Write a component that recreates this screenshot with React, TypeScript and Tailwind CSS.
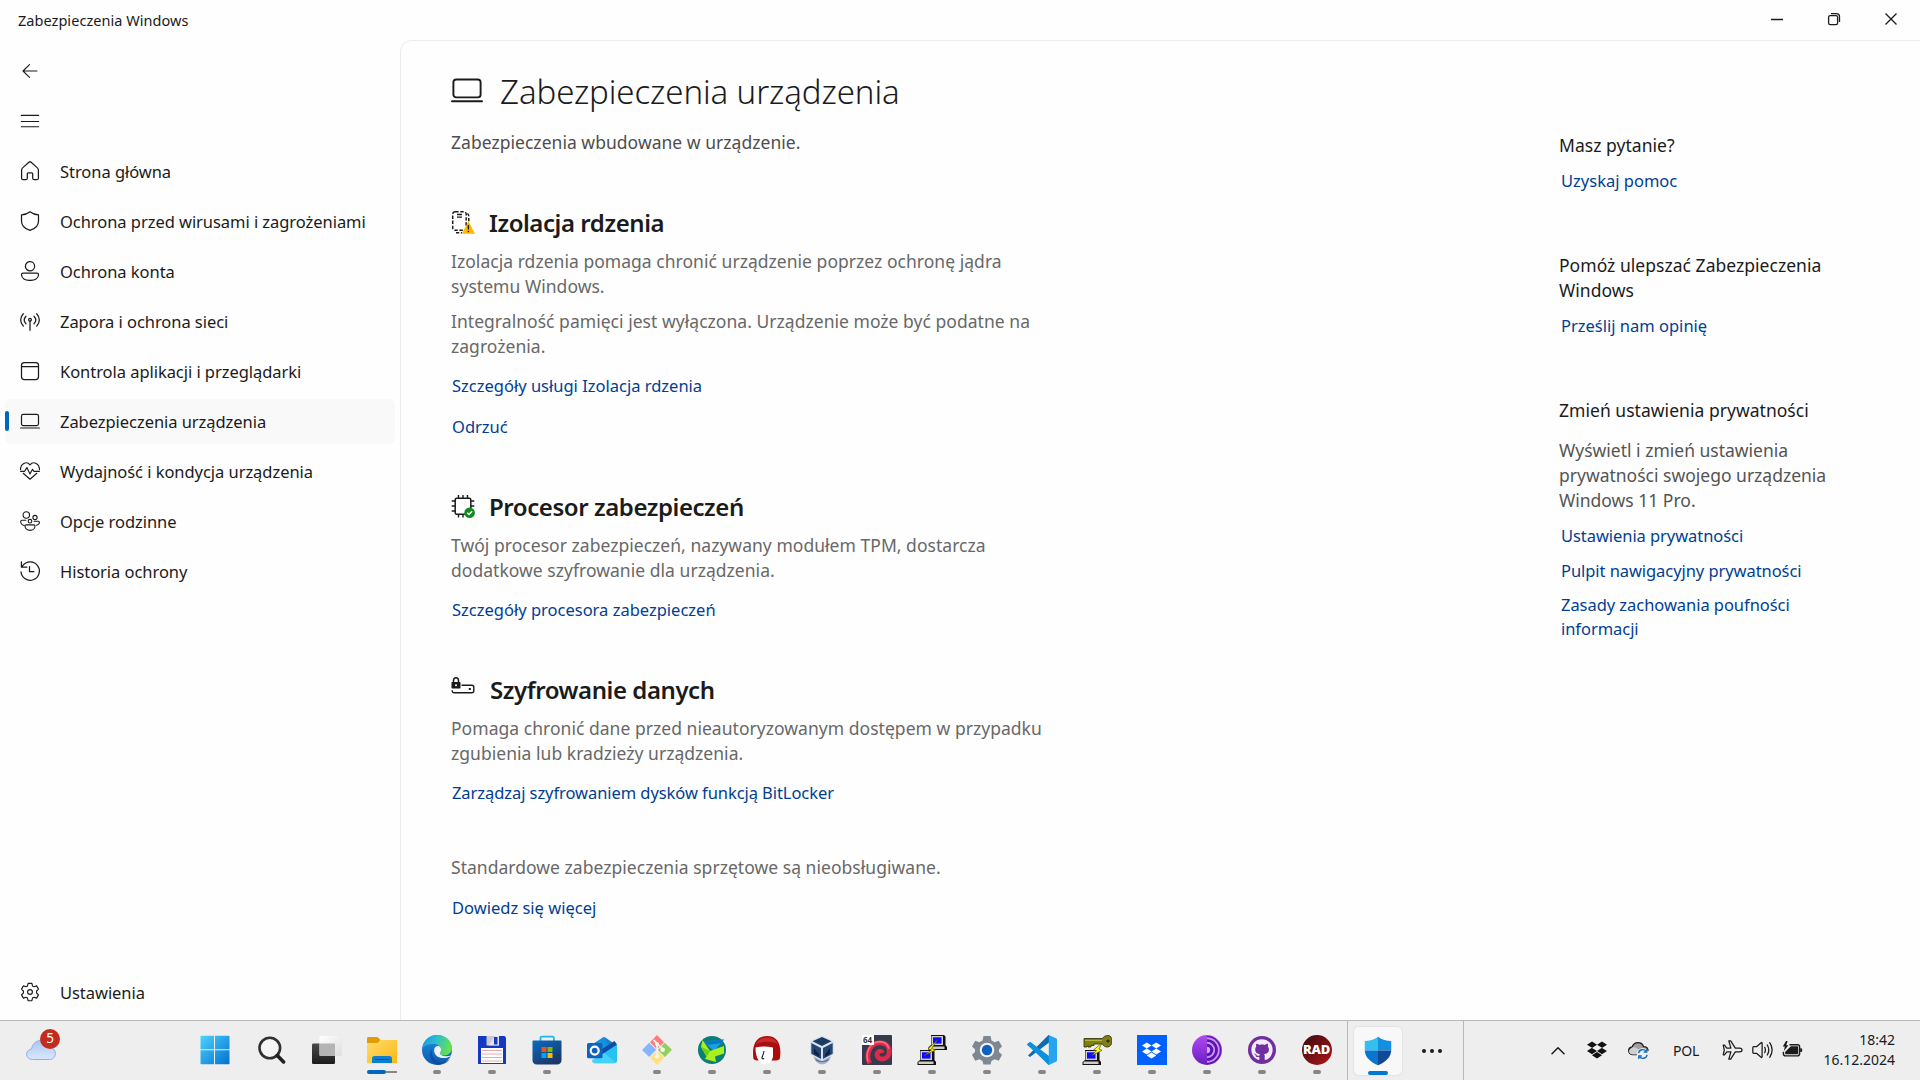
import React from "react";
import { FaDropbox, FaGithub } from "react-icons/fa";

type Kids = { children: React.ReactNode };

/* ---------- line icons ---------- */

function Line({ children, size = 20, sw = 1.25 }: Kids & { size?: number; sw?: number }) {
  return (
    <svg
      width={size}
      height={size}
      viewBox="0 0 20 20"
      fill="none"
      stroke="#1b1b1b"
      strokeWidth={sw}
      strokeLinecap="round"
      strokeLinejoin="round"
      className="shrink-0"
    >
      {children}
    </svg>
  );
}

const BackIcon = () => (
  <Line sw={1.1}>
    <path d="M17 10H3M9.5 3.7 3 10l6.500 6.300" />
  </Line>
);
const MenuIcon = () => (
  <Line sw={1.1}>
    <path d="M1.300 4.400h17.400M1.300 10.500h17.400M1.300 15.800h17.400" />
  </Line>
);
const HomeIcon = () => (
  <Line>
    <path d="M1.600 9c0-.9.3-1.500 1-2.100L8.900 1.200c.7-.6 1.500-.6 2.200 0l6.300 5.700c.7.6 1 1.200 1 2.100v8.200c0 .9-.6 1.500-1.500 1.500h-2.700c-.9 0-1.500-.6-1.500-1.500v-4.400c0-.6-.4-1-1-1H8.300c-.6 0-1 .4-1 1v4.400c0 .9-.6 1.500-1.500 1.500H3.100c-.9 0-1.500-.6-1.500-1.500z" />
  </Line>
);
const ShieldIcon = () => (
  <Line>
    <path d="M10 .8c2.300 1.900 5 2.900 8.500 3.100v6c0 4.600-3 7.700-8.500 9.500C4.500 17.600 1.500 14.500 1.500 9.900v-6C5 3.700 7.700 2.700 10 .8z" />
  </Line>
);
const PersonIcon = () => (
  <Line>
    <circle cx="10" cy="5.200" r="4.600" />
    <path d="M3 12.200h14c.9 0 1.500.6 1.500 1.500 0 3.500-3.600 5.700-8.500 5.700s-8.500-2.200-8.500-5.700c0-.9.6-1.500 1.500-1.500z" />
  </Line>
);
const NetworkIcon = () => (
  <Line>
    <path d="M10 10v9.300M3.300 2.700C-.2 6.400-.2 11.400 3.300 15M16.700 2.700c3.500 3.700 3.500 8.700 0 12.300M6 5.200c-2.200 2.300-2.200 5.300 0 7.600M14 5.200c2.200 2.300 2.200 5.300 0 7.600" />
    <circle cx="10" cy="8.700" r="1.400" />
  </Line>
);
const AppIcon = () => (
  <Line>
    <rect x="1.500" y="1.500" width="17" height="17" rx="2.800" />
    <path d="M1.700 5.700h16.600" />
  </Line>
);
const LaptopIcon = ({ size = 20 }: { size?: number }) => (
  <Line size={size} sw={1.2}>
    <rect x="1.500" y="3.400" width="17" height="11.200" rx="1.800" />
    <path d="M.6 17h18.800" />
  </Line>
);
const HeartIcon = () => (
  <Line sw={1.150}>
    <path d="M.6 8.800C-.1 3.200 6.500-.6 10 3.800c3.500-4.400 10.100-.6 9.400 5" />
    <path d="M.6 10.300h4l2.300-3.700L10 13l2.500-4.700 1.300 2h5.600M3.200 12.300 10 18.200l6.800-5.900" />
  </Line>
);
const FamilyIcon = () => (
  <Line sw={1.1}>
    <circle cx="6.300" cy="4" r="3.200" />
    <circle cx="15" cy="6.500" r="2.100" />
    <circle cx="10" cy="10.200" r="1.800" />
    <path d="M5.800 9.200H2c-.8 0-1.300.5-1.300 1.300 0 1.900 1.300 3.400 3.300 4M14 10.200h4.200c.7 0 1.200.5 1.200 1.100 0 1.700-1.200 2.700-3 3M6 13.900h8c.7 0 1 .4 1 1.100 0 2.500-2.100 4.400-5 4.400s-5-1.900-5-4.400c0-.7.3-1.100 1-1.100z" />
  </Line>
);
const HistoryIcon = () => (
  <Line>
    <path d="M1 10.800a9.200 9.200 0 1 0 2.100-6.600L1.500 5.900M1.400.9v5.300h5.400M9.500 5.600v5.100h4.400" />
  </Line>
);
const SettingsIcon = () => (
  <Line sw={1.150}>
    <circle cx="10" cy="10" r="2.400" />
    <path d="M8.100 1.300h3.800l.6 2.600 1.500.8 2.600-.8 1.900 3.200-1.900 1.900v2l1.900 1.900-1.900 3.200-2.600-.8-1.500.8-.6 2.600H8.100l-.6-2.600-1.500-.8-2.600.8-1.900-3.200L3.400 11V9L1.500 7.100l1.900-3.200 2.600.8 1.500-.8z" />
  </Line>
);

/* ---------- section icons ---------- */

const CoreIcon = () => (
  <svg width="24" height="24" viewBox="0 0 24 24" fill="none" className="shrink-0">
    <rect x="1.700" y="1.700" width="13.500" height="18.600" rx="2.500" stroke="#1b1b1b" strokeWidth="1.500" strokeDasharray="3.400 1.700" />
    <path d="M6 4.500h5M6 7.200h5" stroke="#1b1b1b" strokeWidth="1.300" />
    <path d="M16.500 3.500c1 .8 1.300 1.700 1.300 3V12M5 22.800h6" stroke="#1b1b1b" strokeWidth="1.500" strokeDasharray="3.200 1.700" />
    <path d="M17.500 11.200 24 23.700H10.800z" fill="#ffb900" />
    <path d="M17.400 15v4.600M17.400 20.700v1.500" stroke="#1b1b1b" strokeWidth="1.400" />
  </svg>
);
const ChipIcon = () => (
  <svg width="24" height="24" viewBox="0 0 24 24" fill="none" className="shrink-0">
    <rect x="4.200" y="4.200" width="15.600" height="16" rx="1.500" stroke="#1b1b1b" strokeWidth="1.500" />
    <path d="M7.500 1v3M12 1v3M16.500 1v3M7.500 20v3.500M12 20v3.500M.7 7h3.500M.7 12h3.500M.7 17h3.500M20 7h3.300M20 12h3.300" stroke="#1b1b1b" strokeWidth="1.400" />
    <circle cx="18.600" cy="18.700" r="5.300" fill="#0f8a1c" />
    <path d="m16.200 18.700 1.800 1.800 3.100-3.300" stroke="#fff" strokeWidth="1.500" />
  </svg>
);
const DriveIcon = () => (
  <svg width="24" height="24" viewBox="0 0 24 24" fill="none" className="shrink-0">
    <path d="M10.500 8.300h10.300c1.200 0 2 .8 2 2v3.500c0 1.200-.8 2-2 2H3.200c-1.200 0-2-.8-2-2v-.5" stroke="#1b1b1b" strokeWidth="1.400" />
    <path d="M2.500 5.500V3.700C2.500 2 3.400.8 5 .8S7.500 2 7.500 3.700v1.800" stroke="#1b1b1b" strokeWidth="1.500" />
    <rect x="0.500" y="5" width="9" height="6.500" rx="0.700" fill="#1b1b1b" />
    <circle cx="5" cy="8.200" r="1" fill="#fff" />
    <rect x="17.800" y="11" width="2" height="2" fill="#1b1b1b" />
  </svg>
);

/* ---------- taskbar icons ---------- */

function Pic({ children }: Kids) {
  return (
    <svg width="30" height="30" viewBox="0 0 30 30" className="shrink-0">
      {children}
    </svg>
  );
}

const StartIcon = () => (
  <Pic>
    <defs>
      <linearGradient id="st" x1="0" y1="0" x2="1" y2="1">
        <stop offset="0" stopColor="#4fd2ff" />
        <stop offset="1" stopColor="#0070d0" />
      </linearGradient>
    </defs>
    <path fill="url(#st)" d="M1.500.8H14v13.500H.5V1.800c0-.6.4-1 1-1zM15 .8h13.500c.6 0 1 .4 1 1v12.500H15zM.5 15.300H14v14H1.500c-.6 0-1-.4-1-1zM15 15.300h14.500v13c0 .6-.4 1-1 1H15z" />
  </Pic>
);
const SearchIcon = () => (
  <Pic>
    <circle cx="12.800" cy="13" r="10.300" fill="#f4f4f4" stroke="#303030" strokeWidth="2.600" />
    <path d="m20.300 20.500 6.300 6.400" stroke="#202020" strokeWidth="3.600" strokeLinecap="round" />
  </Pic>
);
const TaskViewIcon = () => (
  <Pic>
    <defs>
      <linearGradient id="tv" x1="0" y1="0" x2="0" y2="1">
        <stop offset="0" stopColor="#4a4a4a" />
        <stop offset="1" stopColor="#1c1c1c" />
      </linearGradient>
      <linearGradient id="tw" x1="0" y1="0" x2="1" y2="1">
        <stop offset="0" stopColor="#fff" />
        <stop offset="1" stopColor="#dedede" />
      </linearGradient>
    </defs>
    <rect x="0" y="8.500" width="23" height="20.500" rx="1.200" fill="url(#tv)" />
    <rect x="7.500" y="1" width="22.300" height="20" rx="1.200" fill="url(#tw)" />
    <path d="M7.500 8.500H23V21H8.500c-.6 0-1-.4-1-1z" fill="#b4b4b4" />
  </Pic>
);
const FolderIcon = () => (
  <Pic>
    <defs>
      <linearGradient id="fo" x1="0" y1="0" x2="1" y2="1">
        <stop offset="0" stopColor="#ffdc6e" />
        <stop offset="1" stopColor="#fbb80f" />
      </linearGradient>
    </defs>
    <path d="M0 3.500C0 2.600.6 2 1.500 2h8.200c.6 0 1.100.2 1.500.6L13.500 5H30v6H0z" fill="#e09c05" />
    <path d="M0 8h9.500c.6 0 1-.2 1.500-.6L13.500 5H29c.6 0 1 .4 1 1v22.300H0z" fill="url(#fo)" />
    <path d="M5 28V23.500c0-1.500 1-2.500 2.500-2.500h15c1.500 0 2.500 1 2.500 2.500V28z" fill="#0b7fd0" />
    <path d="M8.500 24.500h13" stroke="#08508f" strokeWidth="1.200" strokeLinecap="round" />
  </Pic>
);
const EdgeIcon = () => (
  <Pic>
    <defs>
      <linearGradient id="e1" x1="0" y1="0" x2="1" y2=".3">
        <stop offset="0" stopColor="#1b8fe0" />
        <stop offset=".5" stopColor="#2cbfd0" />
        <stop offset="1" stopColor="#63e052" />
      </linearGradient>
      <linearGradient id="e2" x1="0" y1="0" x2="0" y2="1">
        <stop offset="0" stopColor="#1d93e0" />
        <stop offset="1" stopColor="#0d56b0" />
      </linearGradient>
    </defs>
    <circle cx="15" cy="15" r="15" fill="url(#e2)" />
    <path d="M.3 13.500C1.200 5.800 7.500 0 15 0c8.500 0 15 6 15 12.800 0 4.700-3.500 7.600-7.500 7.600-3.300 0-4.700-1.200-4.700-2.200 0-.9 1.300-1.300 1.300-3.500 0-3-3-5.700-7.300-5.700-5.300 0-9.500 2-11.500 4.500z" fill="url(#e1)" />
    <path d="M10.200 13.300c-2 5 1.200 12.500 8.300 13.600 4 .6 7.200-.6 9.500-2.900C25.500 27.700 21 30 16 30 9 28.500 5.500 18.500 10.200 13.300z" fill="#0b4b9c" opacity=".75" />
    <path d="M17.800 18.200c0-.9 1.300-1.300 1.300-3.500 0-1.800-1-3-2-3.500-2.600-.6-5 1-5 4 0 3.500 2.500 6.600 6.400 7.500 4.500 1 8.500.2 11-2.400-6 2-11.700.1-11.700-2.100z" fill="#f2f2f2" />
    <path d="M29.500 19.500c-.5 1.600-1 3-2 4.500l3 .5V18z" fill="#eee" />
  </Pic>
);
const FloppyIcon = () => (
  <Pic>
    <path d="M1 1h26.500L29 2.500V29H1z" fill="#1438c4" />
    <path d="M9.500 1h12.500v9.500H9.500z" fill="#c9c9cf" />
    <path d="M11.500 10.500 18 1h4v9.500z" fill="#eee" opacity=".7" />
    <path d="M17 2h3.500v7.500H17z" fill="#1438c4" />
    <path d="M4 13h22v15H4z" fill="#fff" />
    <path d="M5 15.500h20M5 19h20M5 22.500h20M5 26h20" stroke="#eba9a9" strokeWidth="1.200" />
  </Pic>
);
const StoreIcon = () => (
  <Pic>
    <defs>
      <linearGradient id="so" x1="0" y1="0" x2=".6" y2="1">
        <stop offset="0" stopColor="#0a6bc0" />
        <stop offset="1" stopColor="#1c3768" />
      </linearGradient>
    </defs>
    <path d="M8.500 7V2.800c0-.7.5-1.200 1.200-1.200h11c.7 0 1.200.5 1.200 1.200V7" fill="none" stroke="#1fb6ef" strokeWidth="1.800" />
    <path d="M.5 6.500c0-.6.4-1 1-1h27c.6 0 1 .4 1 1V25c0 2.800-1.700 4.500-4.500 4.500H5C2.200 29.500.5 27.800.5 25z" fill="url(#so)" />
    <path d="M9.500 12h5v5h-5z" fill="#f25022" />
    <path d="M15.500 12h5v5h-5z" fill="#7fba00" />
    <path d="M9.500 18h5v5h-5z" fill="#00a4ef" />
    <path d="M15.500 18h5v5h-5z" fill="#ffb900" />
  </Pic>
);
const OutlookIcon = () => (
  <Pic>
    <path d="M4 10.500 16 2.600c.8-.5 1.500-.5 2.300 0L30 10.500l-13 9z" fill="#1d7fd2" />
    <path d="M16.500 2.300 6 9l11 8 6-4.500z" fill="#1492e0" />
    <path d="M30 9.500v16c0 1.700-1 2.800-2.700 2.800H8c-1.700 0-2.700-1-2.700-2.800L17 18z" fill="#27c2f2" />
    <path d="M30 9.500 17 18l-2 1.500V14l12.500-8z" fill="#0c4ea6" />
    <path d="m5.300 24 11.700-6 12 9.500c-.5.500-1 .7-1.700.7H8c-1.700 0-2.700-1-2.700-2.700z" fill="#4fdcf8" opacity=".7" />
    <rect x="0" y="8" width="15.500" height="15.300" rx="1.500" fill="#0f62bd" />
    <circle cx="7.700" cy="15.600" r="4" fill="none" stroke="#fff" strokeWidth="2.200" />
  </Pic>
);
const GitIcon = () => (
  <Pic>
    <path d="m15 0 7 7.200-7 7-7-7z" fill="#ff7b7b" />
    <path d="m22.800 7.800 7.200 7-7.200 7.200-7-7z" fill="#92cf5e" />
    <path d="m7.200 7.800 7 7-7 7.200L0 14.900z" fill="#86b4ff" />
    <path d="m15 15.700 7 7L15 30l-7-7.300z" fill="#ffe07c" />
    <path d="M11.500 5 15 8.500V22M15.500 9l5.500 5.500" stroke="#f1efe8" strokeWidth="1.800" fill="none" />
    <circle cx="15" cy="9" r="2" fill="#f6f4ee" />
    <circle cx="15" cy="21.300" r="2.300" fill="#f6f4ee" />
    <circle cx="20.700" cy="14.800" r="2.300" fill="#f6f4ee" />
  </Pic>
);
const GreenIcon = () => (
  <Pic>
    <circle cx="15" cy="15" r="14" fill="#0b7f74" />
    <path d="m6 6.500 21-2L17 16z" fill="#18a2e4" />
    <path d="m6 6.500 21-2-3 3.500-13 2z" fill="#0b76c2" />
    <path d="m5.500 5 7.500 11 14-5v7.500l-9 3 1 5.500-11-3 1.500-2.500L4 12z" fill="#a9f01c" />
    <path d="m4.500 12 8.500 4-3.500 6z" fill="#6fd010" />
  </Pic>
);
const RedHairIcon = () => (
  <Pic>
    <path d="M1.500 24C-.5 10 4 1 15 1s15 9 12.800 23c-1.800 1.400-3.800 1.800-6.300 1.500H8c-2.500.3-4.700-.1-6.500-1.500z" fill="#ad0c0c" />
    <path d="M4 9C6.500 4 10 2.500 15 2.500S23.500 4 26 9C19 6 11 6 4 9z" fill="#d63b3b" opacity=".65" />
    <path d="M3.500 12.500c6-1.300 12-1.300 17.500 0v9c-1 5-4 8-8 8-4.500 0-9.500-5-9.500-17z" fill="#fff" />
    <path d="M12 16c-.4 3-1.300 5-2.200 7 .7 1.200 1.600 1 2.400.3" fill="none" stroke="#1c1c1c" strokeWidth="1.100" />
  </Pic>
);
const CubeIcon = () => (
  <Pic>
    <path d="M6.500 21c1 5 4.500 8.300 8.500 8.300s8-3.300 9-8.300z" fill="#a3b1c7" />
    <path d="M8.500 24.500c3.500 3 9.500 3 13 0M9.500 21c3.500 3 8.500 3 12 0" fill="none" stroke="#5d7395" strokeWidth="1.200" />
    <path d="M15 .5 27 6v13.500L15 26 3 19.500V6z" fill="#d9e3ef" />
    <path d="m15 2 9.500 4.300L15 11 5.500 6.300z" fill="#1d3a63" />
    <path d="m4.300 8 9.700 5v11l-9.700-5.300zM25.700 8 16 13v11l9.700-5.300z" fill="#254673" />
    <path d="m7 13 5 6.500v2.200l-5-3zM23 13l-5 6.500v2.200l5-3z" fill="#0e2344" />
  </Pic>
);
const SwirlIcon = () => (
  <span className="relative size-[30px]">
    <Pic>
      <rect width="30" height="30" rx="1" fill="#353b49" />
      <path d="M7.500 28.500C3 18.500 8.500 7.800 18 7.800c6 0 9.300 4 9.300 8.700 0 4.500-3.500 8-8 7.500-4-.5-5.300-4.300-3.300-6.700 1.300-1.600 3.800-1.300 4.300.5" fill="none" stroke="#dc2c4e" strokeWidth="4.800" />
      <path d="M6 26.500C3 17 8.500 6.800 17.500 6.600c5.500 0 8.500 3.200 9.300 7" fill="none" stroke="#ff6a80" strokeWidth="1.600" />
    </Pic>
    <span className="absolute top-0 left-0 flex h-[10px] w-3 items-center justify-center bg-white text-[8px] leading-none font-bold text-[#333]">64</span>
  </span>
);
const Terminal = ({ x, y }: { x: number; y: number }) => (
  <g transform={`translate(${x} ${y})`}>
    <path d="M3 0h13l1.500 1.500V10L19 12v3H.5v-3L3 10z" fill="#111" />
    <path d="M3.500 1H15v9H3.500z" fill="#d4d0c8" />
    <path d="M5 2.300h8.500v6.300H5z" fill="#0b0bff" />
    <path d="M1.500 11.500h15V14h-15z" fill="#cfcbc3" />
  </g>
);
const PuttyIcon = () => (
  <Pic>
    <Terminal x={11} y={0} />
    <Terminal x={0} y={15} />
    <path d="m20.500 5-9.500 9 3.500 1-7 5.500 11-5.500-4-1.500z" fill="#ffff1a" stroke="#55500a" strokeWidth=".7" />
  </Pic>
);
const PuttygenIcon = () => (
  <Pic>
    <Terminal x={0} y={15} />
    <path d="M2 3.500h18.500C21.500 1.500 23.500.5 26 .5c2.500 0 4 2 4 5.500s-2 6-4.500 6-4-1-5-3H12v1.500H9V12H6v-1.500L5 12H2z" fill="#808012" stroke="#2b2b05" strokeWidth=".8" />
    <circle cx="26" cy="6" r="1.600" fill="#2b2b05" />
    <path d="M3 5.500h17" stroke="#b5b54a" strokeWidth="1" />
    <path d="m20 8-8.500 7 3 .6-4.500 5 10-5.300-3-1.300z" fill="#ffff1a" stroke="#55500a" strokeWidth=".7" />
  </Pic>
);
const GearIcon = () => (
  <Pic>
    <path
      d="M11.500 1h7l1 4.500 3 1.700 4.300-1.400 3.200 5.800-3 2.700v2.800l3 2.700-3.200 5.900-4.300-1.400-3 1.700-1 3.500h-7l-1-3.500-3-1.700-4.300 1.400L0 19.800l3-2.700v-2.800l-3-2.700 3.200-5.800 4.300 1.400 3-1.700z"
      fill="#7f8790"
      strokeLinejoin="round"
    />
    <circle cx="15" cy="15" r="7.300" fill="#f1f2f3" />
    <circle cx="15" cy="15" r="5.200" fill="#0c62bd" />
  </Pic>
);
const CodeIcon = () => (
  <Pic>
    <path d="M1 9.500 3 8l19 14.500V30h-.5z" fill="#0d8bd4" />
    <path d="M1 20.500 3 22 22 7.500V0h-.5z" fill="#0b6cb5" />
    <path d="M.5 10.300c-.6-.6-.5-1.200 0-1.600l1.800-1.500c.5-.4 1-.4 1.500 0L22 21v8.500z" fill="#0f8fd9" />
    <path d="M21.800 0 29 3.300c.7.3 1 .8 1 1.500v20.400c0 .7-.3 1.200-1 1.500L21.800 30z" fill="#25a5f0" />
  </Pic>
);
const DropboxTile = () => (
  <span className="flex size-[30px] items-center justify-center bg-[#0061fe]">
    <FaDropbox size={19} color="#fff" />
  </span>
);
const TorIcon = () => (
  <Pic>
    <defs>
      <linearGradient id="to" x1="0" y1="0" x2="0" y2="1">
        <stop offset="0" stopColor="#b04bf0" />
        <stop offset="1" stopColor="#6a1bc4" />
      </linearGradient>
    </defs>
    <circle cx="15" cy="15" r="15" fill="url(#to)" />
    <path d="M15 1a14 14 0 0 1 0 28z" fill="#5c12b0" />
    <path d="M15 3.200a11.800 11.800 0 0 1 0 23.600M15 7.800a7.200 7.200 0 0 1 0 14.400" fill="none" stroke="#c896f5" strokeWidth="1.900" />
    <path d="M15 11.800a3.200 3.200 0 0 1 0 6.400z" fill="#d3aaf7" />
  </Pic>
);
const GithubDisc = () => (
  <span className="flex size-7 items-center justify-center rounded-full bg-[#6f2f9f]">
    <FaGithub size={22} color="#f3ebf8" />
  </span>
);
const RadIcon = () => (
  <span className="flex size-[30px] items-center justify-center rounded-full bg-gradient-to-br from-[#3a0a0c] to-[#b5121b]">
    <span className="font-['Open_Sans',sans-serif] text-[13px] font-extrabold tracking-tight text-white">RAD</span>
  </span>
);
const DefenderIcon = () => (
  <Pic>
    <path d="M15 .8C11 4 6.500 5 1.800 5v9.500H15z" fill="#34c0ef" />
    <path d="M15 .8c4 3.200 8.500 4.200 13.200 4.200v9.500H15z" fill="#1490e0" />
    <path d="M1.800 14.500H15v14.700C7 26 2 21 1.800 14.500z" fill="#0876cf" />
    <path d="M28.200 14.500H15v14.700c8-3.200 13-8.200 13.200-14.700z" fill="#10499a" />
  </Pic>
);

/* ---------- page data ---------- */

const nav = [
  { label: "Strona główna", Icon: HomeIcon },
  { label: "Ochrona przed wirusami i zagrożeniami", Icon: ShieldIcon },
  { label: "Ochrona konta", Icon: PersonIcon },
  { label: "Zapora i ochrona sieci", Icon: NetworkIcon },
  { label: "Kontrola aplikacji i przeglądarki", Icon: AppIcon },
  { label: "Zabezpieczenia urządzenia", Icon: LaptopIcon, active: true },
  { label: "Wydajność i kondycja urządzenia", Icon: HeartIcon },
  { label: "Opcje rodzinne", Icon: FamilyIcon },
  { label: "Historia ochrony", Icon: HistoryIcon },
];

type Mark = "none" | "dot" | "folder";
const apps: { Icon: () => React.ReactElement; mark: Mark }[] = [
  { Icon: SearchIcon, mark: "none" },
  { Icon: TaskViewIcon, mark: "none" },
  { Icon: FolderIcon, mark: "folder" },
  { Icon: EdgeIcon, mark: "dot" },
  { Icon: FloppyIcon, mark: "dot" },
  { Icon: StoreIcon, mark: "dot" },
  { Icon: OutlookIcon, mark: "none" },
  { Icon: GitIcon, mark: "dot" },
  { Icon: GreenIcon, mark: "dot" },
  { Icon: RedHairIcon, mark: "dot" },
  { Icon: CubeIcon, mark: "dot" },
  { Icon: SwirlIcon, mark: "dot" },
  { Icon: PuttyIcon, mark: "dot" },
  { Icon: GearIcon, mark: "dot" },
  { Icon: CodeIcon, mark: "dot" },
  { Icon: PuttygenIcon, mark: "dot" },
  { Icon: DropboxTile, mark: "dot" },
  { Icon: TorIcon, mark: "dot" },
  { Icon: GithubDisc, mark: "dot" },
  { Icon: RadIcon, mark: "dot" },
];

/* ---------- page parts ---------- */

function Link({ children, className = "" }: Kids & { className?: string }) {
  return (
    <a className={`block w-fit text-[16.500px] leading-6 text-[#003e92] ${className}`}>{children}</a>
  );
}

function Body({ children, className = "" }: Kids & { className?: string }) {
  return <p className={`text-[17.500px] leading-[25px] tracking-[0.002em] text-[#686868] ${className}`}>{children}</p>;
}

function Heading({ icon, children, className = "" }: Kids & { icon: React.ReactNode; className?: string }) {
  return (
    <h2 className={`flex h-8 items-center text-[24px] leading-8 font-semibold tracking-[-0.018em] text-[#1b1b1b] ${className}`}>
      <span className="mr-[14px] -mt-[3px]">{icon}</span>
      {children}
    </h2>
  );
}

function Side({ children, className = "" }: Kids & { className?: string }) {
  return <h3 className={`text-[17.500px] leading-[25px] tracking-[0.002em] text-[#1b1b1b] ${className}`}>{children}</h3>;
}

function TitleBar() {
  return (
    <header className="flex h-10 items-center justify-between pl-[18px] text-[14.500px] tracking-[0.003em] text-[#1b1b1b]">
      <span className="pt-px">Zabezpieczenia Windows</span>
      <svg width="150" height="38" viewBox="0 0 150 38" fill="none" stroke="#1b1b1b" strokeWidth="1.300" className="self-start">
        <path d="M1 19.500h12M115.500 13.500l11 11M126.500 13.500l-11 11" />
        <rect x="58.600" y="15.600" width="9" height="9" rx="1.600" />
        <path d="M61 13.600h5.500c1.700 0 3 1.300 3 3V22" />
      </svg>
    </header>
  );
}

function Sidebar() {
  return (
    <nav className="flex w-[400px] shrink-0 flex-col pt-[6px] pb-[3px] text-[16.500px] tracking-[-0.003em] text-[#1b1b1b]">
      <div className="flex h-[50px] items-center pl-5">
        <BackIcon />
      </div>
      <div className="flex h-[50px] items-center pl-5">
        <MenuIcon />
      </div>
      {nav.map(({ label, Icon, active }) => (
        <div key={label} className="flex h-[50px] items-center px-[5px]">
          <div className={`flex h-[45px] w-[390px] items-center rounded-[6px] ${active ? "bg-[#f9f9f9]" : ""}`}>
            <span className={`mr-[11px] h-5 w-1 rounded-full ${active ? "bg-[#0067c0]" : ""}`} />
            <Icon />
            <span className="ml-5 pt-[2px]">{label}</span>
          </div>
        </div>
      ))}
      <div className="mt-auto flex h-[50px] items-center pl-5">
        <SettingsIcon />
        <span className="ml-5 pt-[2px]">Ustawienia</span>
      </div>
    </nav>
  );
}

function Content() {
  return (
    <section className="w-[620px] pt-[29px]">
      <h1 className="flex h-11 items-center text-[33px] leading-[44px] font-light tracking-[-0.003em] text-[#1b1b1b]">
        <span className="-mt-[5px] mr-[17px]">
          <LaptopIcon size={32} />
        </span>
        Zabezpieczenia urządzenia
      </h1>
      <p className="mt-4 text-[17.500px] leading-[25px] tracking-[0.002em] text-[#4e4e4e]">Zabezpieczenia wbudowane w urządzenie.</p>

      <Heading icon={<CoreIcon />} className="mt-[52px]">Izolacja rdzenia</Heading>
      <Body className="mt-[10px]">
        Izolacja rdzenia pomaga chronić urządzenie poprzez ochronę jądra
        <br />
        systemu Windows.
      </Body>
      <Body className="mt-[10px]">
        Integralność pamięci jest wyłączona. Urządzenie może być podatne na
        <br />
        zagrożenia.
      </Body>
      <Link className="mt-[15px] ml-px">Szczegóły usługi Izolacja rdzenia</Link>
      <Link className="mt-[17px] ml-px">Odrzuć</Link>

      <Heading icon={<ChipIcon />} className="mt-[52px]">Procesor zabezpieczeń</Heading>
      <Body className="mt-[10px]">
        Twój procesor zabezpieczeń, nazywany modułem TPM, dostarcza
        <br />
        dodatkowe szyfrowanie dla urządzenia.
      </Body>
      <Link className="mt-[15px] ml-px">Szczegóły procesora zabezpieczeń</Link>

      <Heading icon={<DriveIcon />} className="mt-[52px]">
        <span className="ml-px">Szyfrowanie danych</span>
      </Heading>
      <Body className="mt-[10px]">
        Pomaga chronić dane przed nieautoryzowanym dostępem w przypadku
        <br />
        zgubienia lub kradzieży urządzenia.
      </Body>
      <Link className="mt-[15px] ml-px tracking-[-0.004em]">Zarządzaj szyfrowaniem dysków funkcją BitLocker</Link>

      <Body className="mt-[50px]">Standardowe zabezpieczenia sprzętowe są nieobsługiwane.</Body>
      <Link className="mt-4 ml-px">Dowiedz się więcej</Link>
    </section>
  );
}

function Aside() {
  return (
    <aside className="w-[361px] pt-[92px]">
      <Side>Masz pytanie?</Side>
      <Link className="mt-[11px] ml-0.5">Uzyskaj pomoc</Link>

      <Side className="mt-[60px]">
        Pomóż ulepszać Zabezpieczenia
        <br />
        Windows
      </Side>
      <Link className="mt-[11px] ml-0.5">Prześlij nam opinię</Link>

      <Side className="mt-[60px]">Zmień ustawienia prywatności</Side>
      <p className="mt-[15px] text-[17.500px] leading-[25px] text-[#545454]">
        Wyświetl i zmień ustawienia
        <br />
        prywatności swojego urządzenia
        <br />
        Windows 11 Pro.
      </p>
      <Link className="mt-[11px] ml-0.5 tracking-[-0.004em]">Ustawienia prywatności</Link>
      <Link className="mt-[11px] ml-0.5 tracking-[-0.004em]">Pulpit nawigacyjny prywatności</Link>
      <Link className="mt-[10px] ml-0.5 tracking-[-0.003em]">
        Zasady zachowania poufności
        <br />
        informacji
      </Link>
    </aside>
  );
}

function Weather() {
  return (
    <div className="relative w-[188px] pl-[26px]">
      <svg width="30" height="30" viewBox="0 0 30 30">
        <defs>
          <linearGradient id="we" x1="0" y1="0" x2="0" y2="1">
            <stop offset="0" stopColor="#a9c6f5" />
            <stop offset="1" stopColor="#dbe8fa" />
          </linearGradient>
        </defs>
        <path
          d="M6.500 24.500C2.800 24.500.6 22 .6 19.200c0-3 2.300-5 5-5.200C6.300 9 10 5.500 14.800 5.500c4.600 0 8 3 8.900 7 3.500.1 5.700 2.700 5.700 5.900 0 3.500-2.500 6.100-6 6.100z"
          fill="url(#we)"
          stroke="#8caef0"
          strokeWidth="1"
        />
      </svg>
      <span className="absolute -top-[6px] left-10 flex size-5 items-center justify-center rounded-full bg-[#c42b1c] text-[13.500px] leading-none text-white">
        5
      </span>
    </div>
  );
}

function Tray() {
  return (
    <div className="ml-auto flex h-full items-center pr-[25px] text-[14px] text-[#1b1b1b]">
      <svg width="14" height="9" viewBox="0 0 14 9" fill="none" stroke="#1b1b1b" strokeWidth="1.500" strokeLinecap="round" strokeLinejoin="round">
        <path d="m1 7.800 6-6 6 6" />
      </svg>
      <span className="ml-[22px]">
        <FaDropbox size={20} color="#111" />
      </span>
      <svg width="21" height="20" viewBox="0 0 21 20" className="ml-[21px]">
        <path d="M5 14.500c-2.600 0-4.300-1.500-4.300-3.800 0-2 1.500-3.500 3.500-3.700C5 4.500 7 2.700 9.900 2.700c2.700 0 4.900 1.500 5.700 4 2.400 0 4.200 1.500 4.400 3.700l-8 4.100z" fill="#a0a0a0" stroke="#1b1b1b" strokeWidth="1.300" />
        <path d="M4 7.500c2-.6 4-.2 6 1.500l4.500 4-2 1.500H5c-2.500 0-4-1.500-4-3.500z" fill="#cfcfcf" />
        <circle cx="14.800" cy="14" r="6" fill="#eee" />
        <path d="M10.500 13.200a4.400 4.400 0 0 1 7.800-1.800M19.100 14.800a4.400 4.400 0 0 1-7.800 1.800" fill="none" stroke="#0f6cbd" strokeWidth="1.400" />
        <path d="M18.800 9v3h-3M10.800 19v-3h3" fill="none" stroke="#0f6cbd" strokeWidth="1.300" />
      </svg>
      <span className="ml-6 w-[27px] tracking-[-0.018em]">POL</span>
      <svg width="21" height="20" viewBox="0 0 21 20" className="ml-[22px]" fill="none" stroke="#1b1b1b" strokeWidth="1.250" strokeLinejoin="round">
        <path d="M1.200 5.200h1.300l2.300 2.900h4.100L6.800.8h1.900l4.600 7.300h4.300c1.200 0 2.400.9 2.400 1.900s-1.200 1.900-2.400 1.900h-4.300l-4.600 7.300H6.800l2.100-7.300H4.800l-2.300 2.900H1.200L2.300 10z" />
      </svg>
      <svg width="21" height="20" viewBox="0 0 21 20" className="ml-[9px]" fill="none" stroke="#1b1b1b" strokeWidth="1.250" strokeLinecap="round" strokeLinejoin="round">
        <path d="M.8 7.700c0-.6.4-1 1-1h2.700l4.600-4c.5-.4 1-.2 1 .5v13.600c0 .7-.5.900-1 .5l-4.600-4H1.800c-.6 0-1-.4-1-1z" />
        <path d="M12.700 7.300c.9 1.700.9 3.700 0 5.400M15.300 5c1.900 3.200 1.900 6.800 0 10M17.700 2.700c3 4.500 3 10.100 0 14.600" />
      </svg>
      <svg width="21" height="20" viewBox="0 0 21 20" className="ml-[9px]" fill="none" stroke="#1b1b1b" strokeWidth="1.400">
        <path d="M7.500 4.700h8c1.200 0 2.100.9 2.100 2.100v7c0 1.200-.9 2.100-2.100 2.100H3.500c-1.200 0-2.100-.9-2.100-2.100v-2" />
        <path d="M8.800 6.300h6.700c.4 0 .7.300.7.700v6.600c0 .4-.3.700-.7.700H3.800c-.4 0-.7-.300-.7-.7v-1.500z" fill="#1b1b1b" stroke="none" />
        <path d="M18.200 8.300h.8c.7 0 1.200.6 1.200 1.900s-.5 1.900-1.200 1.900h-.8z" fill="#1b1b1b" stroke="none" />
        <path d="M4 1 .8 6.500h2L1.900 11l4.500-5.800H4.300L5.600 1z" fill="#1b1b1b" stroke="none" />
      </svg>
      <div className="ml-[19px] w-[73px] text-right leading-5">
        <div>18:42</div>
        <div>16.12.2024</div>
      </div>
    </div>
  );
}

function Taskbar() {
  return (
    <footer className="flex h-[60px] items-center border-t border-[#b9b9b9] bg-[#eeeeee] pb-px">
      <Weather />
      <div className="flex w-[56px] justify-start pl-3">
        <StartIcon />
      </div>
      {apps.map(({ Icon, mark }, i) => (
        <div key={i} className="relative flex h-[58px] w-[55px] items-center justify-center">
          <Icon />
          {mark === "dot" && <span className="absolute bottom-[5px] left-[23.500px] h-1 w-2 rounded-full bg-[#868686]" />}
          {mark === "folder" && (
            <span className="absolute bottom-[5px] left-[12.500px] flex h-1 w-[30px] items-center">
              <span className="h-1 w-[19px] rounded-full bg-[#0067c0]" />
              <span className="h-0.5 w-[11px] bg-[#868686]" />
            </span>
          )}
        </div>
      ))}
      <div className="ml-[3px] -mb-px flex w-[117px] items-center self-stretch border-x border-[#b9b9b9] pl-[6px]">
        <div className="relative flex size-12 items-center justify-center rounded-[5px] bg-[#f8f8f8] shadow-[0_0_1px_1px_#e3e3e3]">
          <DefenderIcon />
          <span className="absolute bottom-0 left-[14px] h-1 w-5 rounded-full bg-[#0078d4]" />
        </div>
        <div className="ml-5 flex gap-1">
          <span className="size-1 rounded-full bg-[#1b1b1b]" />
          <span className="size-1 rounded-full bg-[#1b1b1b]" />
          <span className="size-1 rounded-full bg-[#1b1b1b]" />
        </div>
      </div>
      <Tray />
    </footer>
  );
}

export default function App() {
  return (
    <div className="flex h-[1080px] w-[1920px] flex-col overflow-hidden bg-[#fefefe] font-['Noto_Sans','Open_Sans',sans-serif]">
      <TitleBar />
      <div className="flex min-h-0 flex-1">
        <Sidebar />
        <main className="flex flex-1 justify-between rounded-tl-[12px] border-t border-l border-[#ebebeb] pl-[50px]">
          <Content />
          <Aside />
        </main>
      </div>
      <Taskbar />
    </div>
  );
}
